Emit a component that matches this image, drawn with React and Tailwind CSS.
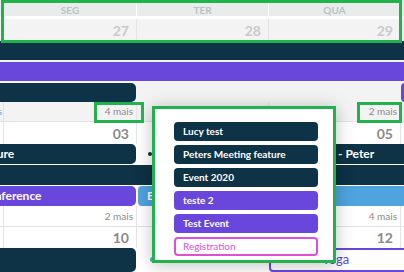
import React from 'react';

const GRID = 'grid grid-cols-[133px_133px_132px_132px_132px] ml-[-130px] w-[662px]';

const popupEvents = [
  { title: 'Lucy test', kind: 'navy' },
  { title: 'Peters Meeting feature', kind: 'navy' },
  { title: 'Event 2020', kind: 'navy' },
  { title: 'teste 2', kind: 'purple' },
  { title: 'Test Event', kind: 'purple' },
  { title: 'Registration', kind: 'outline' },
];

const pillClass = {
  navy: 'bg-[#0e3246] text-white font-bold pl-[9px]',
  purple: 'bg-[#6947dc] text-white font-bold pl-[9px]',
  outline: 'bg-white border-2 border-[#df4fdc] text-[#df4fdc] pl-[7px]',
};

function DateRow({ days, muted, height }) {
  return (
    <div className={GRID + ' ' + height}>
      {days.map((d, i) => (
        <div
          key={i}
          className={
            'border-l border-[#e4e4e4] pr-[7px] text-[14px] font-bold flex items-center justify-end ' +
            (muted ? 'text-[#c9c9c9]' : 'text-[#8a8a8a]')
          }
        >
          {d}
        </div>
      ))}
    </div>
  );
}

function MoreRow({ items, height }) {
  return (
    <div className={GRID + ' border-b border-[#e2e2e2] ' + height}>
      {items.map((t, i) => (
        <div
          key={i}
          className={
            'border-l border-[#e4e4e4] flex items-center justify-end text-[10px] ' +
            (i === 0 ? 'text-[#5aa9e6] pr-[1px]' : 'text-[#8a8a8a] pr-[3px]')
          }
        >
          {t}
        </div>
      ))}
    </div>
  );
}

export default function App() {
  return (
    <div className="relative w-[404px] h-[272px] overflow-hidden bg-white font-['Lato','Liberation_Sans',sans-serif]">
      {/* header + week 1 (previous month) */}
      <div className="bg-[#f3f3f3]">
        <div className={GRID + ' h-[16px] bg-[#e9ecec]'}>
          {['DOM', 'SEG', 'TER', 'QUA', 'QUI'].map((n) => (
            <div key={n} className="border-l border-white flex items-center justify-center pt-[3px] text-[10px] font-bold text-[#b9c1c5]">
              {n}
            </div>
          ))}
        </div>
        <div className="h-[3px] bg-white" />
        <DateRow days={['26', '27', '28', '29', '30']} muted height="h-[22px]" />
        <div className="flex flex-col gap-[2px]">
          <div className={GRID + ' h-[19px]'}>
            <div className="col-span-5 bg-[#0e3246]" />
          </div>
          <div className={GRID + ' h-[19px]'}>
            <div className="col-span-5 bg-[#6947dc]" />
          </div>
          <div className={GRID + ' h-[19px]'}>
            <div className="col-span-2 bg-[#0e3246] rounded-r-[5px]" />
            <div className="col-start-5 ml-[1px] bg-[#6947dc] rounded-l-[4px]" />
          </div>
        </div>
        <MoreRow items={['3 mais', '4 mais', '', '2 mais', '']} height="h-[20px]" />
      </div>

      {/* week 2 */}
      <DateRow days={['02', '03', '04', '05', '06']} height="h-[22px]" />
      <div className={GRID + ' h-[20px] text-[12px] font-bold text-white'}>
        <div className="col-span-2 bg-[#0e3246] rounded-r-[5px] flex items-center pl-[21px] whitespace-nowrap">
          Peters Meeting feature
        </div>
        <div className="flex items-center pl-[12px]">
          <span className="w-[4px] h-[4px] rounded-full bg-[#0e3246]" />
        </div>
        <div className="col-span-2 ml-[1px] bg-[#0e3246] rounded-l-[5px] flex items-center pl-[69px] whitespace-nowrap">
          - Peter
        </div>
      </div>
      <div className={GRID + ' h-[20px] mt-[1px]'}>
        <div className="col-span-5 bg-[#0e3246]" />
      </div>
      <div className={GRID + ' h-[20px] mt-[1px] text-[12px] font-bold text-white'}>
        <div className="col-span-2 bg-[#6947dc] rounded-r-[5px] flex items-center pl-[110px] whitespace-nowrap">
          Conference
        </div>
        <div className="col-span-3 ml-[2px] bg-[#4fa3de] rounded-l-[4px] flex items-center pl-[9px] whitespace-nowrap">
          Evento
        </div>
      </div>
      <MoreRow items={['', '2 mais', '', '4 mais', '']} height="h-[21px]" />

      {/* week 3 */}
      <DateRow days={['09', '10', '11', '12', '13']} height="h-[21px]" />
      <div className={GRID + ' h-[20px] text-[12px]'}>
        <div className="col-span-2 bg-[#0e3246] rounded-r-[5px]" />
        <div className="flex items-center pl-[14px]">
          <span className="w-[5px] h-[5px] rounded-full bg-[#4fa3de]" />
        </div>
        <div className="col-span-2 ml-[1px] border-2 border-[#6947dc] rounded-l-[4px] flex items-center pl-[51px] text-[13px] text-[#5a46d6] whitespace-nowrap">
          Yoga
        </div>
      </div>

      {/* popup with more events */}
      <div className="absolute left-[152px] top-[106px] w-[184px] h-[157px] bg-white border-[3px] border-[#22b24c] shadow-[0_2px_16px_rgba(0,0,0,0.25)] pt-[13px] pl-[19px] pr-[15px]">
        <div className="flex flex-col gap-[4px]">
          {popupEvents.map((e) => (
            <div
              key={e.title}
              className={'h-[19px] rounded-[4px] flex items-center text-[10px] whitespace-nowrap ' + pillClass[e.kind]}
            >
              {e.title}
            </div>
          ))}
        </div>
      </div>

      {/* highlight boxes */}
      <div className="absolute left-[1px] top-0 w-[401px] h-[43px] border-[3px] border-[#22b24c]" />
      <div className="absolute left-[94px] top-[102px] w-[50px] h-[21px] border-[3px] border-[#22b24c]" />
      <div className="absolute left-[357px] top-[102px] w-[45px] h-[21px] border-[3px] border-[#22b24c]" />
    </div>
  );
}
